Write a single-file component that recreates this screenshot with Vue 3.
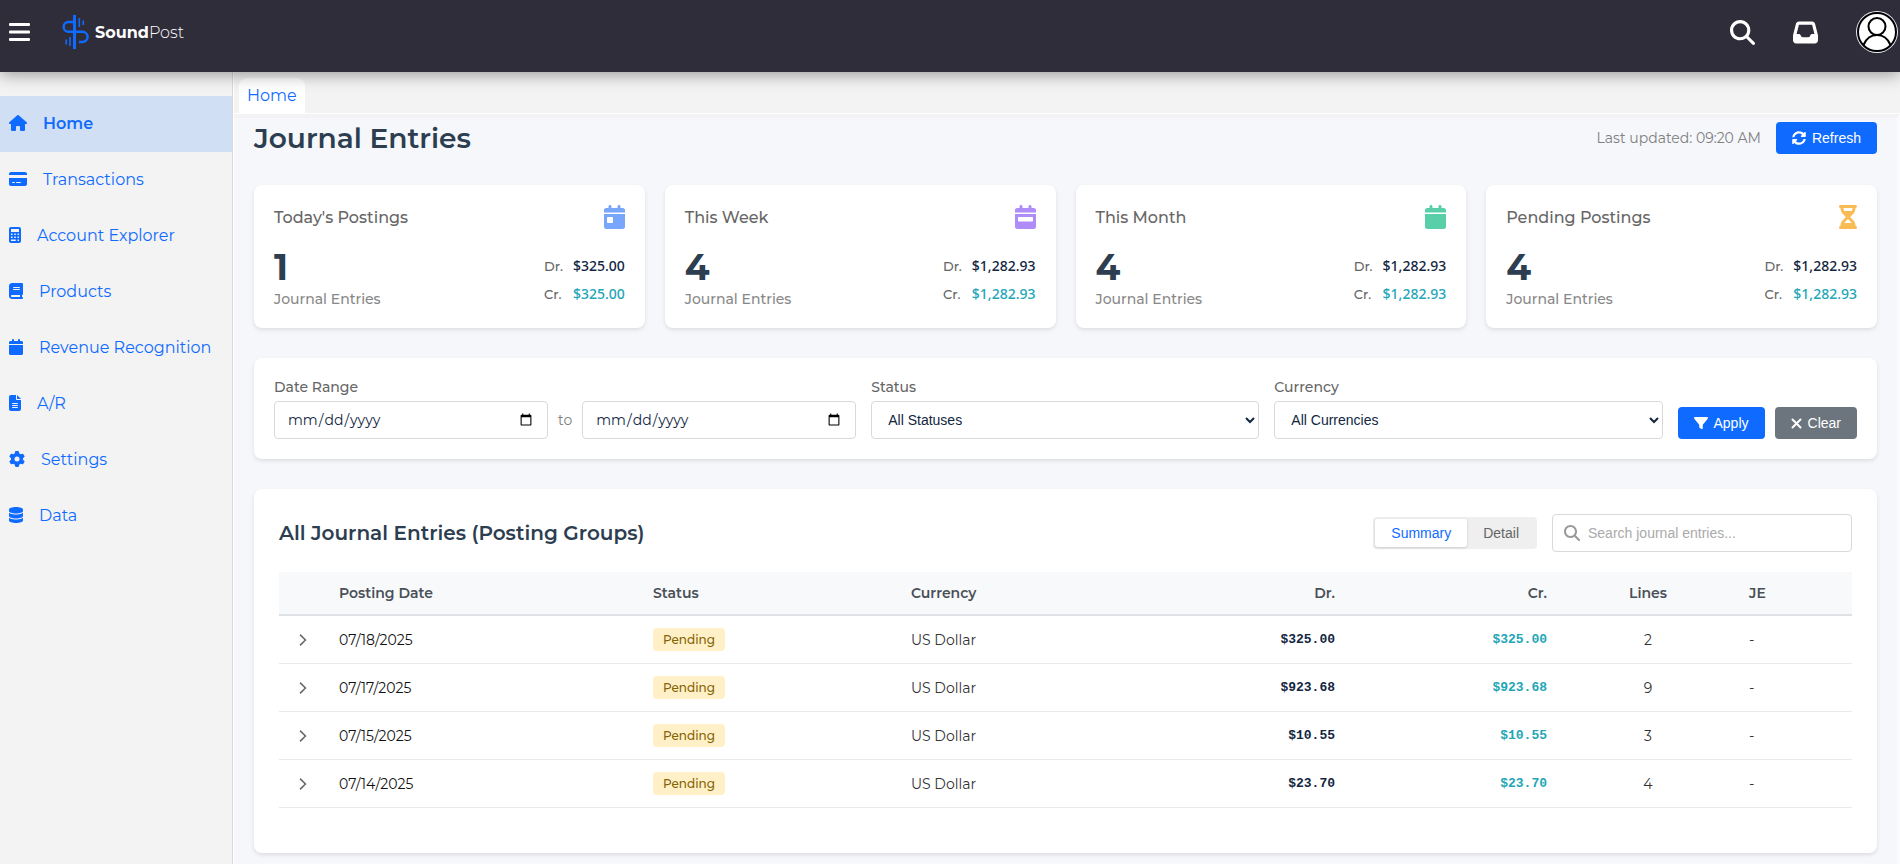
<script setup>
import { ref } from 'vue'

const calendarBase =
  'M96 32V64H48C21.5 64 0 85.5 0 112v48H448V112c0-26.5-21.5-48-48-48H352V32c0-17.7-14.3-32-32-32s-32 14.3-32 32V64H160V32c0-17.7-14.3-32-32-32S96 14.3 96 32zM448 192H0V464c0 26.5 21.5 48 48 48H400c26.5 0 48-21.5 48-48V192z'

const icons = {
  house: { w: 576, d: 'M575.8 255.5c0 18-15 32.1-32 32.1h-32l.7 160.2c0 2.7-.2 5.4-.5 8.1V472c0 22.1-17.9 40-40 40H456c-1.1 0-2.2 0-3.3-.1c-1.4 .1-2.8 .1-4.2 .1H416 392c-22.1 0-40-17.9-40-40V448 384c0-17.7-14.3-32-32-32H256c-17.7 0-32 14.3-32 32v64 24c0 22.1-17.9 40-40 40H160 128.1c-1.5 0-3-.1-4.5-.2c-1.2 .1-2.4 .2-3.6 .2H104c-22.1 0-40-17.9-40-40V360c0-.9 0-1.9 .1-2.8V287.6H32c-18 0-32-14-32-32.1c0-9 3-17 10-24L266.4 8c7-7 15-8 22-8s15 2 21 7L564.8 231.5c8 7 12 15 11 24z' },
  card: { w: 576, d: 'M64 32C28.7 32 0 60.7 0 96v32H576V96c0-35.3-28.7-64-64-64H64zM576 224H0V416c0 35.3 28.7 64 64 64H512c35.3 0 64-28.7 64-64V224zM112 352h64c8.8 0 16 7.2 16 16s-7.2 16-16 16H112c-8.8 0-16-7.2-16-16s7.2-16 16-16zm112 16c0-8.8 7.2-16 16-16H368c8.8 0 16 7.2 16 16s-7.2 16-16 16H240c-8.8 0-16-7.2-16-16z' },
  calculator: { w: 384, d: 'M64 0C28.7 0 0 28.7 0 64V448c0 35.3 28.7 64 64 64H320c35.3 0 64-28.7 64-64V64c0-35.3-28.7-64-64-64H64zM64 64H320V160H64zM64 208h48v48H64zM168 208h48v48h-48zM272 208h48v48h-48zM64 304h48v48H64zM168 304h48v48h-48zM272 304h48v48h-48zM64 400h152v48H64zM272 400h48v48h-48z' },
  book: { w: 448, d: 'M96 0C43 0 0 43 0 96V416c0 53 43 96 96 96H384h32c17.7 0 32-14.3 32-32s-14.3-32-32-32V384c17.7 0 32-14.3 32-32V32c0-17.7-14.3-32-32-32H384 96zm0 384H352v64H96c-17.7 0-32-14.3-32-32s14.3-32 32-32zm32-240c0-8.8 7.2-16 16-16H336c8.8 0 16 7.2 16 16s-7.2 16-16 16H144c-8.8 0-16-7.2-16-16zm16 48H336c8.8 0 16 7.2 16 16s-7.2 16-16 16H144c-8.8 0-16-7.2-16-16s7.2-16 16-16z' },
  calendar: { w: 448, d: calendarBase },
  calendarDay: { w: 448, d: calendarBase + 'M80 256h96q16 0 16 16v96q0 16-16 16H80q-16 0-16-16v-96q0-16 16-16z' },
  calendarWeek: { w: 448, d: calendarBase + 'M80 256H368q16 0 16 16v64q0 16-16 16H80q-16 0-16-16v-64q0-16 16-16z' },
  file: { w: 384, d: 'M64 0C28.7 0 0 28.7 0 64V448c0 35.3 28.7 64 64 64H320c35.3 0 64-28.7 64-64V160H256c-17.7 0-32-14.3-32-32V0H64zM256 0V128H384L256 0zM112 256H272c8.8 0 16 7.2 16 16s-7.2 16-16 16H112c-8.8 0-16-7.2-16-16s7.2-16 16-16zm0 64H272c8.8 0 16 7.2 16 16s-7.2 16-16 16H112c-8.8 0-16-7.2-16-16s7.2-16 16-16zm0 64H272c8.8 0 16 7.2 16 16s-7.2 16-16 16H112c-8.8 0-16-7.2-16-16s7.2-16 16-16z' },
  gear: { w: 512, d: 'M495.9 166.6c3.2 8.7 .5 18.4-6.4 24.6l-43.3 39.4c1.1 8.3 1.7 16.8 1.7 25.4s-.6 17.1-1.7 25.4l43.3 39.4c6.9 6.2 9.6 15.9 6.4 24.6c-4.4 11.9-9.7 23.3-15.8 34.3l-4.7 8.1c-6.6 11-14 21.4-22.1 31.2c-5.9 7.2-15.7 9.6-24.5 6.8l-55.7-17.7c-13.4 10.3-28.2 18.9-44 25.4l-12.5 57.1c-2 9.1-9 16.3-18.2 17.8c-13.8 2.3-28 3.5-42.5 3.5s-28.7-1.2-42.5-3.5c-9.2-1.5-16.2-8.7-18.2-17.8l-12.5-57.1c-15.8-6.5-30.6-15.1-44-25.4L83.1 425.9c-8.8 2.8-18.6 .3-24.5-6.8c-8.1-9.8-15.5-20.2-22.1-31.2l-4.7-8.1c-6.1-11-11.4-22.4-15.8-34.3c-3.2-8.7-.5-18.4 6.4-24.6l43.3-39.4C64.6 273.1 64 264.6 64 256s.6-17.1 1.7-25.4L22.4 191.2c-6.9-6.2-9.6-15.9-6.4-24.6c4.4-11.9 9.7-23.3 15.8-34.3l4.7-8.1c6.6-11 14-21.4 22.1-31.2c5.9-7.2 15.7-9.6 24.5-6.8l55.7 17.7c13.4-10.3 28.2-18.9 44-25.4l12.5-57.1c2-9.1 9-16.3 18.2-17.8C227.3 1.2 241.5 0 256 0s28.7 1.2 42.5 3.5c9.2 1.5 16.2 8.7 18.2 17.8l12.5 57.1c15.8 6.5 30.6 15.1 44 25.4l55.7-17.7c8.8-2.8 18.6-.3 24.5 6.8c8.1 9.8 15.5 20.2 22.1 31.2l4.7 8.1c6.1 11 11.4 22.4 15.8 34.3zM256 336a80 80 0 1 0 0-160 80 80 0 1 0 0 160z' },
  database: { w: 448, d: 'M448 80v48c0 44.2-100.3 80-224 80S0 172.2 0 128V80C0 35.8 100.3 0 224 0S448 35.8 448 80zM393.2 214.7c20.8-7.4 39.9-16.9 54.8-28.6V288c0 44.2-100.3 80-224 80S0 332.2 0 288V186.1c14.9 11.8 34 21.2 54.8 28.6C99.7 230.7 159.5 240 224 240s124.3-9.3 169.2-25.3zM0 346.1c14.9 11.8 34 21.2 54.8 28.6C99.7 390.7 159.5 400 224 400s124.3-9.3 169.2-25.3c20.8-7.4 39.9-16.9 54.8-28.6V432c0 44.2-100.3 80-224 80S0 476.2 0 432V346.1z' },
  hourglass: { w: 384, d: 'M32 0C14.3 0 0 14.3 0 32S14.3 64 32 64V75c0 42.4 16.9 83.1 46.9 113.1L146.7 256 78.9 323.9C48.9 353.9 32 394.6 32 437v11c-17.7 0-32 14.3-32 32s14.3 32 32 32H64 320h32c17.7 0 32-14.3 32-32s-14.3-32-32-32V437c0-42.4-16.9-83.1-46.9-113.1L237.3 256l67.9-67.9c30-30 46.9-70.7 46.9-113.1V64c17.7 0 32-14.3 32-32s-14.3-32-32-32H320 64 32zM96 75V64H288V75c0 19-5.6 37.4-16 53H112c-10.3-15.6-16-34-16-53zm16 309c3.5-5.3 7.6-10.3 12.1-14.9L192 301.3l67.9 67.9c4.6 4.6 8.6 9.6 12.1 14.9H112z' }
}

const navItems = [
  { label: 'Home', icon: icons.house, active: true },
  { label: 'Transactions', icon: icons.card },
  { label: 'Account Explorer', icon: icons.calculator },
  { label: 'Products', icon: icons.book },
  { label: 'Revenue Recognition', icon: icons.calendar },
  { label: 'A/R', icon: icons.file },
  { label: 'Settings', icon: icons.gear },
  { label: 'Data', icon: icons.database }
]

const cards = [
  { title: "Today's Postings", icon: icons.calendarDay, tone: 'blue', count: 1, amount: '$325.00' },
  { title: 'This Week', icon: icons.calendarWeek, tone: 'purple', count: 4, amount: '$1,282.93' },
  { title: 'This Month', icon: icons.calendar, tone: 'green', count: 4, amount: '$1,282.93' },
  { title: 'Pending Postings', icon: icons.hourglass, tone: 'amber', count: 4, amount: '$1,282.93' }
]

const rows = [
  { date: '07/18/2025', amount: '$325.00', lines: 2 },
  { date: '07/17/2025', amount: '$923.68', lines: 9 },
  { date: '07/15/2025', amount: '$10.55', lines: 3 },
  { date: '07/14/2025', amount: '$23.70', lines: 4 }
]

const view = ref('Summary')
const search = ref('')
</script>

<template>
  <div class="app">
    <header class="topbar">
      <button class="icon-btn" type="button" aria-label="Toggle menu">
        <svg width="21" height="18" viewBox="0 0 21 18" fill="#fff">
          <rect width="21" height="3" rx="1" />
          <rect y="7.5" width="21" height="3" rx="1" />
          <rect y="15" width="21" height="3" rx="1" />
        </svg>
      </button>
      <a class="brand" href="#">
        <svg width="27" height="34" viewBox="0 0 27 34" fill="none" stroke="#0f6bff">
          <path d="M12.5 0V34" stroke-width="3" />
          <path d="M11 7H6.500a4.900 4.900 0 0 0 0 9.800H20.500a5 5 0 0 1 0 10.200H17" stroke-width="2.400" />
          <path d="M17.300 3v9M21.300 5.500v4.500M4.200 24.500v5M8 22v9" stroke-width="1.600" />
        </svg>
        <span class="wordmark"><b>Sound</b><span class="thin">Post</span></span>
      </a>
      <div class="actions">
        <button class="icon-btn" type="button" aria-label="Search">
          <svg width="25" height="25" viewBox="0 0 512 512" fill="#fff"><path d="M416 208c0 45.900-14.900 88.300-40 122.700L502.600 457.400c12.500 12.500 12.500 32.800 0 45.300s-32.800 12.500-45.300 0L330.700 376c-34.400 25.200-76.800 40-122.700 40C93.100 416 0 322.900 0 208S93.100 0 208 0S416 93.100 416 208zM208 352a144 144 0 1 0 0-288 144 144 0 1 0 0 288z" /></svg>
        </button>
        <button class="icon-btn" type="button" aria-label="Inbox">
          <svg width="25" height="25" viewBox="0 0 512 512" fill="#fff"><path d="M121 32C91.600 32 66 52 58.900 80.500L1.900 308.400C.6 313.500 0 318.700 0 323.900V416c0 35.300 28.700 64 64 64H448c35.300 0 64-28.700 64-64V323.900c0-5.200-.6-10.400-1.900-15.500l-57-227.900C446 52 420.400 32 391 32H121zm0 64H391l48 192H387.800c-12.100 0-23.200 6.800-28.600 17.700l-14.300 28.600c-5.400 10.800-16.500 17.700-28.600 17.700H195.800c-12.100 0-23.200-6.800-28.600-17.700l-14.300-28.600c-5.400-10.800-16.500-17.700-28.600-17.700H73L121 96z" /></svg>
        </button>
        <button class="icon-btn avatar" type="button" aria-label="Account">
          <svg width="42" height="42" viewBox="0 0 42 42">
            <circle cx="21" cy="21" r="21" fill="#e9effa" />
            <circle cx="21" cy="21" r="19" fill="#fff" stroke="#000" stroke-width="2" />
            <g fill="none" stroke="#000" stroke-width="2">
              <circle cx="21" cy="15.500" r="8.500" />
              <path d="M7.500 34C10 28 15 24 21 24S32 28 34.500 34" />
            </g>
          </svg>
        </button>
      </div>
    </header>

    <div class="body">
      <nav class="sidebar" aria-label="Main">
        <a v-for="item in navItems" :key="item.label" class="nav-item" :class="{ active: item.active }" href="#">
          <svg class="nav-icon" :viewBox="`0 0 ${item.icon.w} 512`" fill="currentColor" fill-rule="evenodd"><path :d="item.icon.d" /></svg>
          <span>{{ item.label }}</span>
        </a>
      </nav>

      <div class="workspace">
        <div class="tabs"><a class="tab" href="#">Home</a></div>

        <main class="content">
          <div class="page-head">
            <h1>Journal Entries</h1>
            <div class="head-side">
              <span class="updated">Last updated: 09:20 AM</span>
              <button class="btn primary" type="button">
                <svg width="14" height="14" viewBox="0 0 512 512" fill="currentColor"><path d="M370.720 133.280C339.458 104.008 298.888 87.962 255.848 88c-77.458.068-144.328 53.178-162.791 126.850-1.344 5.363-6.122 9.150-11.651 9.150H24.103c-7.498 0-13.194-6.807-11.807-14.176C33.933 94.924 134.813 8 256 8c66.448 0 126.791 26.136 171.315 68.685L463.030 40.970C478.149 25.851 504 36.559 504 57.941V192c0 13.255-10.745 24-24 24H345.941c-21.382 0-32.090-25.851-16.971-40.971l41.750-41.749zM32 296h134.059c21.382 0 32.090 25.851 16.971 40.971l-41.750 41.750c31.262 29.273 71.835 45.319 114.876 45.280 77.418-.070 144.315-53.144 162.787-126.849 1.344-5.363 6.122-9.150 11.651-9.150h57.304c7.498 0 13.194 6.807 11.807 14.176C478.067 417.076 377.187 504 256 504c-66.448 0-126.791-26.136-171.315-68.685L48.970 471.030C33.851 486.149 8 475.441 8 454.059V320c0-13.255 10.745-24 24-24z" /></svg>
                Refresh
              </button>
            </div>
          </div>

          <section class="cards">
            <article v-for="card in cards" :key="card.title" class="panel card">
              <div class="card-head">
                <h2>{{ card.title }}</h2>
                <svg class="card-icon" :class="card.tone" :viewBox="`0 0 ${card.icon.w} 512`" fill="currentColor" fill-rule="evenodd"><path :d="card.icon.d" /></svg>
              </div>
              <div class="card-body">
                <div>
                  <div class="count">{{ card.count }}</div>
                  <div class="count-label">Journal Entries</div>
                </div>
                <dl class="totals">
                  <dt>Dr.</dt><dd class="debit">{{ card.amount }}</dd>
                  <dt>Cr.</dt><dd class="credit">{{ card.amount }}</dd>
                </dl>
              </div>
            </article>
          </section>

          <form class="panel filters" @submit.prevent>
            <div class="field wide">
              <label for="date-from">Date Range</label>
              <div class="range">
                <input id="date-from" class="control" type="date" />
                <span>to</span>
                <input class="control" type="date" aria-label="Date range end" />
              </div>
            </div>
            <div class="field">
              <label for="status">Status</label>
              <select id="status" class="control"><option>All Statuses</option></select>
            </div>
            <div class="field">
              <label for="currency">Currency</label>
              <select id="currency" class="control"><option>All Currencies</option></select>
            </div>
            <div class="filter-actions">
              <button class="btn primary" type="submit">
                <svg width="14" height="14" viewBox="0 0 512 512" fill="currentColor"><path d="M3.900 54.900C10.500 40.900 24.500 32 40 32H472c15.500 0 29.500 8.900 36.100 22.900s4.600 30.500-5.200 42.500L320 320.900V448c0 12.100-6.800 23.200-17.700 28.600s-23.800 4.300-33.500-3l-64-48c-8.100-6-12.800-15.500-12.800-25.600V320.900L9 97.300C-.7 85.400-2.800 68.800 3.900 54.900z" /></svg>
                Apply
              </button>
              <button class="btn muted" type="reset">
                <svg width="11" height="11" viewBox="0 0 11 11" fill="none" stroke="currentColor" stroke-width="2" stroke-linecap="round"><path d="M1.500 1.500l8 8M9.500 1.500l-8 8" /></svg>
                Clear
              </button>
            </div>
          </form>

          <section class="panel entries">
            <div class="entries-head">
              <h2>All Journal Entries (Posting Groups)</h2>
              <div class="entries-tools">
                <div class="toggle">
                  <button v-for="name in ['Summary', 'Detail']" :key="name" type="button" :class="{ on: view === name }" :aria-pressed="view === name" @click="view = name">{{ name }}</button>
                </div>
                <label class="search">
                  <svg width="16" height="16" viewBox="0 0 512 512" fill="#999"><path d="M416 208c0 45.900-14.900 88.300-40 122.700L502.600 457.400c12.500 12.500 12.500 32.800 0 45.300s-32.800 12.500-45.300 0L330.700 376c-34.400 25.200-76.800 40-122.700 40C93.100 416 0 322.900 0 208S93.100 0 208 0S416 93.100 416 208zM208 352a144 144 0 1 0 0-288 144 144 0 1 0 0 288z" /></svg>
                  <input v-model="search" type="text" aria-label="Search journal entries" placeholder="Search journal entries..." />
                </label>
              </div>
            </div>

            <table>
              <colgroup>
                <col class="c-expand" /><col class="c-date" /><col class="c-status" /><col class="c-currency" />
                <col class="c-dr" /><col class="c-cr" /><col class="c-lines" /><col class="c-je" />
              </colgroup>
              <thead>
                <tr>
                  <th></th><th>Posting Date</th><th>Status</th><th>Currency</th>
                  <th class="num">Dr.</th><th class="num">Cr.</th><th class="mid">Lines</th><th>JE</th>
                </tr>
              </thead>
              <tbody>
                <tr v-for="row in rows" :key="row.date">
                  <td class="mid">
                    <button class="expand" type="button" :aria-label="`Expand ${row.date}`">
                      <svg width="8" height="12" viewBox="0 0 8 12" fill="none" stroke="currentColor" stroke-width="1.600" stroke-linecap="round" stroke-linejoin="round"><path d="M1.500 1.200L6.500 6l-5 4.800" /></svg>
                    </button>
                  </td>
                  <td>{{ row.date }}</td>
                  <td><span class="badge">Pending</span></td>
                  <td class="soft">US Dollar</td>
                  <td class="num mono debit">{{ row.amount }}</td>
                  <td class="num mono credit">{{ row.amount }}</td>
                  <td class="mid soft">{{ row.lines }}</td>
                  <td class="soft">-</td>
                </tr>
              </tbody>
            </table>
          </section>
        </main>
      </div>
    </div>
  </div>
</template>

<style>
body {
  margin: 0;
}
</style>

<style scoped>
.app {
  display: flex;
  flex-direction: column;
  min-height: 100vh;
  background: #f3f3f3;
  color: #111;
  font-family: Montserrat, Inter, "Open Sans", sans-serif;
  font-size: 14px;
}
* {
  box-sizing: border-box;
}
a {
  color: #0f6bff;
  text-decoration: none;
}
button {
  border: 0;
  cursor: pointer;
  font-family: Arial, "Liberation Sans", sans-serif;
  font-size: 14px;
}
h1,
h2,
dl,
dd {
  margin: 0;
}

.topbar {
  position: relative;
  z-index: 1;
  display: flex;
  align-items: center;
  height: 72px;
  padding: 0 2px 8px 9px;
  background: #302d3a;
  box-shadow: 0 2px 16px rgba(0, 0, 0, 0.4);
}
.icon-btn {
  display: flex;
  padding: 0;
  background: none;
}
.brand {
  display: flex;
  align-items: center;
  gap: 6px;
  margin-left: 32px;
  color: #fff;
}
.wordmark {
  font-size: 16px;
}
.wordmark b {
  font-weight: 700;
}
.thin {
  font-weight: 300;
}
.actions {
  display: flex;
  align-items: center;
  gap: 38px;
  margin-left: auto;
}

.body {
  display: flex;
  flex: 1;
}
.sidebar {
  flex: 0 0 233px;
  padding-top: 24px;
  border-right: 1px solid #d9d9d9;
}
.nav-item {
  display: flex;
  align-items: center;
  gap: 16px;
  height: 56px;
  padding: 0 0 2px 9px;
  font-size: 16px;
  white-space: nowrap;
}
.nav-item.active {
  background: #d1dff5;
  font-weight: 600;
}
.nav-icon {
  height: 16px;
}

.workspace {
  display: flex;
  flex: 1;
  flex-direction: column;
  min-width: 0;
  border-left: 1px solid #fff;
}
.tabs {
  display: flex;
  align-items: flex-end;
  height: 42px;
  padding-left: 5px;
  border-bottom: 1px solid #fff;
}
.tab {
  padding: 0 8px;
  border-radius: 8px 8px 0 0;
  background: #fff;
  font-size: 16px;
  line-height: 35px;
}
.content {
  flex: 1;
  padding: 4px 20px 8px;
  border-top: 4px solid #f3f3f3;
  border-right: 3px solid #fbfbfd;
  background: #f5f7fb;
}

.page-head {
  display: flex;
  align-items: center;
  justify-content: space-between;
  margin-bottom: 31px;
}
h1 {
  color: #2c3e50;
  font-size: 28px;
  font-weight: 600;
  line-height: 32px;
}
.head-side {
  display: flex;
  align-items: center;
  gap: 15px;
}
.updated {
  color: #808080;
}
.btn {
  display: inline-flex;
  align-items: center;
  gap: 6px;
  height: 32px;
  padding: 0 16px;
  border-radius: 4px;
  color: #fff;
}
.primary {
  background: #0f6bff;
}
.muted {
  background: #6c757d;
}

.panel {
  border-radius: 8px;
  background: #fff;
  box-shadow: 0 2px 4px rgba(0, 0, 0, 0.1);
}
.cards {
  display: grid;
  grid-template-columns: repeat(4, 1fr);
  gap: 20px;
  margin-bottom: 30px;
}
.card {
  padding: 20px;
}
.card-head {
  display: flex;
  align-items: center;
  justify-content: space-between;
  margin-bottom: 15px;
}
.card-head h2 {
  color: #666;
  font-size: 16px;
  font-weight: 500;
}
.card-icon {
  height: 24px;
}
.blue {
  color: #78a6fb;
}
.purple {
  color: #ae8cf9;
}
.green {
  color: #58cfa8;
}
.amber {
  color: #f9bb54;
}
.card-body {
  display: flex;
  align-items: flex-end;
  justify-content: space-between;
}
.count {
  color: #2c3e50;
  font-size: 36px;
  font-weight: 700;
  line-height: 47px;
}
.count-label {
  color: #888;
  font-weight: 500;
  line-height: 17px;
}
.totals {
  display: grid;
  grid-template-columns: auto auto;
  align-items: center;
  column-gap: 10px;
  line-height: 28px;
}
.totals dt {
  color: #666;
  font-size: 13px;
  font-weight: 500;
}
.totals dd {
  font-family: "Segoe UI", "Noto Sans", sans-serif;
  font-weight: 500;
  text-align: right;
}
.debit {
  color: #12263f;
}
.credit {
  color: #22a6b8;
}

.filters {
  display: flex;
  align-items: flex-end;
  gap: 15px;
  margin-bottom: 30px;
  padding: 20px;
}
.field {
  display: flex;
  flex: 2 1 0;
  flex-direction: column;
  gap: 5px;
  min-width: 0;
}
.field.wide {
  flex-grow: 3;
}
.field label {
  color: #666;
  font-weight: 500;
  line-height: 18px;
}
.range {
  display: flex;
  align-items: center;
  gap: 10px;
  color: #808080;
}
.control {
  width: 100%;
  height: 38px;
  padding: 8px 12px;
  border: 1px solid #d9d9d9;
  border-radius: 4px;
  background: #fff;
  color: #12263f;
  font-family: Arial, "Liberation Sans", sans-serif;
  font-size: 14px;
}
.range .control {
  flex: 1;
  min-width: 0;
  font-family: Montserrat, Inter, sans-serif;
}
.filter-actions {
  display: flex;
  gap: 10px;
}

.entries {
  padding: 25px 25px 45px;
}
.entries-head {
  display: flex;
  align-items: center;
  justify-content: space-between;
  margin-bottom: 20px;
}
.entries-head h2 {
  color: #2c3e50;
  font-size: 20px;
  font-weight: 600;
}
.entries-tools {
  display: flex;
  align-items: center;
  gap: 15px;
}
.toggle {
  display: flex;
  padding: 2px;
  border-radius: 4px;
  background: #efefef;
}
.toggle button {
  height: 28px;
  padding: 0 16px;
  border-radius: 3px;
  background: none;
  color: #666;
}
.toggle .on {
  background: #fff;
  box-shadow: 0 1px 3px rgba(0, 0, 0, 0.15);
  color: #0f6bff;
}
.search {
  display: flex;
  align-items: center;
  gap: 8px;
  width: 300px;
  height: 38px;
  padding: 0 11px;
  border: 1px solid #d9d9d9;
  border-radius: 4px;
}
.search input {
  flex: 1;
  min-width: 0;
  padding: 0;
  border: 0;
  outline: 0;
  background: none;
  font-family: Arial, "Liberation Sans", sans-serif;
  font-size: 14px;
}
.search input::placeholder {
  color: #aaa;
}

table {
  width: 100%;
  border-collapse: separate;
  border-spacing: 0;
  table-layout: fixed;
}
.c-expand {
  width: 48px;
}
.c-date {
  width: 314px;
}
.c-status {
  width: 258px;
}
.c-currency {
  width: 230px;
}
.c-dr {
  width: 218px;
}
.c-cr {
  width: 212px;
}
.c-lines {
  width: 178px;
}
.c-je {
  width: 115px;
}
th,
td {
  padding: 0 12px;
  text-align: left;
}
th {
  height: 44px;
  border-bottom: 2px solid #dee2e6;
  background: #f8f9fb;
  color: #495057;
  font-weight: 600;
}
td {
  height: 48px;
  border-bottom: 1px solid #e9ecef;
}
.soft {
  color: #333;
}
.num {
  text-align: right;
}
.mid {
  text-align: center;
}
.mono {
  font-family: Consolas, "Liberation Mono", monospace;
  font-size: 13px;
  font-weight: 700;
}
.debit {
  color: #12263f;
}
.credit {
  color: #22a6b8;
}
.expand {
  display: inline-flex;
  padding: 4px;
  background: none;
  color: #666;
}
.badge {
  display: inline-block;
  padding: 0 10px;
  border-radius: 4px;
  background: #fff0c8;
  color: #856404;
  font-size: 12px;
  font-weight: 500;
  line-height: 23px;
}
</style>
